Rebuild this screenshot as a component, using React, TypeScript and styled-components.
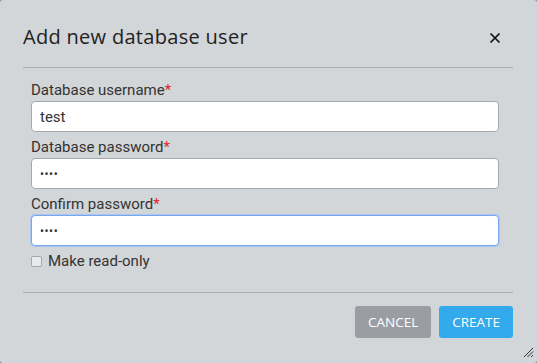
import React from "react";
import styled, { createGlobalStyle } from "styled-components";

const GlobalStyle = createGlobalStyle`
  html, body {
    margin: 0;
    padding: 0;
    background: #8a8d90;
  }
  * {
    box-sizing: border-box;
  }
`;

const Modal = styled.div`
  position: relative;
  width: 537px;
  height: 363px;
  background: #d3d6d9;
  border-radius: 3px;
  display: flex;
  flex-direction: column;
  font-family: Roboto, "Liberation Sans", sans-serif;
  color: #333;
`;

const Header = styled.div`
  margin: 0 24px 0 23px;
  height: 68px;
  border-bottom: 1px solid #a9acaf;
  display: flex;
  align-items: center;
  justify-content: space-between;
  padding-top: 6px;
`;

const Title = styled.h1`
  margin: 0;
  font-family: "Open Sans", "Noto Sans", sans-serif;
  font-weight: 400;
  font-size: 20px;
  color: #222;
  letter-spacing: 0.3px;
`;

const CloseButton = styled.button`
  border: none;
  background: none;
  padding: 0;
  margin-right: 12px;
  margin-top: 3px;
  width: 12px;
  height: 12px;
  display: flex;
  cursor: pointer;
`;

const Body = styled.div`
  padding: 11px 38px 0 31px;
  display: flex;
  flex-direction: column;
  gap: 4px;
`;

const Field = styled.div`
  display: flex;
  flex-direction: column;
`;

const Label = styled.label`
  font-size: 15px;
  line-height: 22px;
  color: #333;
`;

const Required = styled.span`
  color: #e0242b;
`;

const Input = styled.input<{ $focused?: boolean }>`
  height: 31px;
  width: 100%;
  border: 1px solid ${(p) => (p.$focused ? "#79a6ec" : "#a6a8aa")};
  box-shadow: ${(p) => (p.$focused ? "0 0 0 1px #a9c6f2" : "none")};
  border-radius: 4px;
  background: #fff;
  padding: 0 8px;
  font-family: Roboto, "Liberation Sans", sans-serif;
  font-size: 15px;
  font-weight: 400;
  color: #333;
  outline: none;
  caret-color: #000;
  &[type="password"] {
    font-size: 12px;
    letter-spacing: 0.5px;
  }
`;

const CheckRow = styled.label`
  display: flex;
  align-items: center;
  gap: 6px;
  height: 20px;
  margin-top: 1px;
  font-size: 15px;
  color: #333;
`;

const Check = styled.input`
  appearance: none;
  margin: 0;
  width: 11px;
  height: 11px;
  border: 1px solid #a6a8aa;
  border-radius: 2px;
  background: #e9eaeb;
`;

const Footer = styled.div`
  margin: 21px 24px 0 23px;
  border-top: 1px solid #a9acaf;
  padding-top: 13px;
  display: flex;
  justify-content: flex-end;
  gap: 8px;
`;

const Button = styled.button<{ $primary?: boolean }>`
  height: 32px;
  padding: 0 13px;
  border: none;
  border-radius: 3px;
  background: ${(p) => (p.$primary ? "#33aaec" : "#9a9ea2")};
  color: #fff;
  font-family: "Open Sans", "Noto Sans", sans-serif;
  font-size: 13.5px;
  font-weight: 500;
  text-transform: uppercase;
  cursor: pointer;
`;

const Grip = styled.svg`
  position: absolute;
  right: 3px;
  bottom: 5px;
`;

export default function App() {
  return (
    <>
      <GlobalStyle />
      <Modal>
        <Header>
          <Title>Add new database user</Title>
          <CloseButton aria-label="Close">
            <svg width="12" height="12" viewBox="0 0 12 12">
              <path d="M1.5 1.5 L10.5 10.5 M10.5 1.5 L1.5 10.5" stroke="#111" strokeWidth="1.7" />
            </svg>
          </CloseButton>
        </Header>
        <Body>
          <Field>
            <Label>
              Database username<Required>*</Required>
            </Label>
            <Input defaultValue="test" />
          </Field>
          <Field>
            <Label>
              Database password<Required>*</Required>
            </Label>
            <Input type="password" defaultValue="test" />
          </Field>
          <Field>
            <Label>
              Confirm password<Required>*</Required>
            </Label>
            <Input type="password" defaultValue="test" $focused autoFocus />
          </Field>
          <CheckRow>
            <Check type="checkbox" />
            Make read-only
          </CheckRow>
        </Body>
        <Footer>
          <Button>Cancel</Button>
          <Button $primary>Create</Button>
        </Footer>
        <Grip width="11" height="11" viewBox="0 0 11 11">
          <path d="M1 10 L10 1 M4.5 10 L10 4.5 M8 10 L10 8" stroke="#333" strokeWidth="1" />
        </Grip>
      </Modal>
    </>
  );
}
